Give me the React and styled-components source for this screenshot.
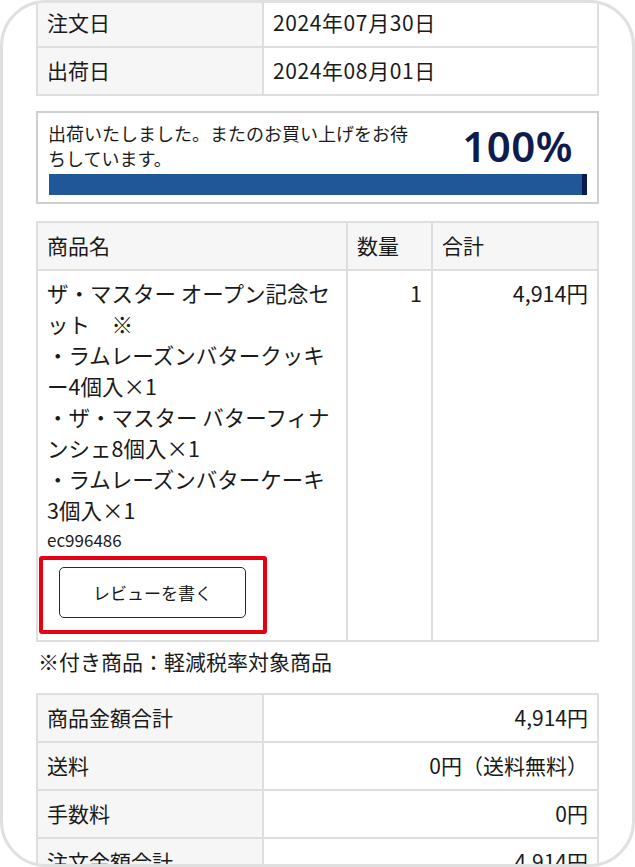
import React from 'react';
import styled, { createGlobalStyle } from 'styled-components';

const GlobalStyle = createGlobalStyle`
    html, body {
        margin: 0;
        padding: 0;
        background: #ffffff;
    }
    * {
        box-sizing: border-box;
    }
`;

const Frame = styled.div`
    width: 635px;
    height: 867px;
    border: 3px solid #e0e0e0;
    border-radius: 46px;
    overflow: hidden;
    background: #ffffff;
    font-family: "Noto Sans CJK JP", "Noto Sans", sans-serif;
    color: #1a1a1a;
`;

const Screen = styled.div`
    display: flex;
    flex-direction: column;
    padding: 0 33px;
    margin-top: -5px; /* scrolled view */
`;

const Table = styled.table`
    width: 100%;
    border-collapse: collapse;
    table-layout: fixed;
    font-size: 21px;
    margin-bottom: ${p => p.$gap || 0}px;
`;

const Cell = styled.td`
    border: 2px solid #dedede;
    height: 48px;
    padding: 0 9px;
    vertical-align: middle;
    line-height: 1.2;
    font-weight: 400;
    text-align: ${p => (p.$right ? 'right' : 'left')};
    background: ${p => (p.$head ? '#f6f6f6' : '#ffffff')};
    white-space: nowrap;
    letter-spacing: ${p => (p.$wide ? '0.6px' : '0')};
`;

const BodyCell = styled.td`
    border: 2px solid #dedede;
    padding: 6px 9px 6px 9px;
    vertical-align: top;
    text-align: ${p => (p.$right ? 'right' : 'left')};
    font-size: 21.5px;
    line-height: 31px;
`;

const ProgressBox = styled.div`
    border: 2px solid #cfcfcf;
    padding: 8px 10px 7px 10px;
    margin-bottom: 17px;
    display: flex;
    flex-direction: column;
    gap: 3px;
`;

const ProgressTop = styled.div`
    display: flex;
    align-items: center;
    justify-content: space-between;
`;

const ProgressText = styled.div`
    width: 372px;
    font-size: 18px;
    line-height: 25px;
`;

const Percent = styled.div`
    font-family: "Noto Sans", "Liberation Sans", sans-serif;
    font-weight: 600;
    font-size: 42px;
    line-height: 1;
    color: #0e1b4c;
    padding-right: 14px;
    letter-spacing: 0.5px;
`;

const Bar = styled.div`
    height: 21px;
    background: #0b1a4b;
    margin-left: 1px;
`;

const BarFill = styled.div`
    height: 100%;
    background: #1f5799;
`;

const Line = styled.span`
    display: block;
    white-space: nowrap;
`;

const Code = styled.div`
    font-size: 17px;
    line-height: 29px;
`;

const Mark = styled.div`
    display: inline-block;
    margin: 2px 0 0 -8px;
    padding: 7px 17px 12px 16px;
    border: 4px solid #e60012;
    border-radius: 3px;
`;

const ReviewButton = styled.button`
    display: block;
    width: 187px;
    height: 51px;
    border: 1.5px solid #2a2a2a;
    border-radius: 5px;
    background: #ffffff;
    color: #1a1a1a;
    font-family: "Noto Sans CJK JP", "Noto Sans", sans-serif;
    font-size: 17px;
`;

const Note = styled.div`
    font-size: 21px;
    line-height: 30px;
    margin: 4px 0 17px 2px;
    white-space: nowrap;
`;

const dates = [
    ['注文日', '2024年07月30日'],
    ['出荷日', '2024年08月01日'],
];

const productLines = [
    'ザ・マスター オープン記念セ',
    'ット　※',
    '・ラムレーズンバタークッキ',
    'ー4個入×1',
    '・ザ・マスター バターフィナ',
    'ンシェ8個入×1',
    '・ラムレーズンバターケーキ',
    '3個入×1',
];

const totals = [
    ['商品金額合計', '4,914円'],
    ['送料', '0円（送料無料）'],
    ['手数料', '0円'],
    ['注文金額合計', '4,914円'],
];

export default function App() {
    const progress = 99;

    return (
        <>
            <GlobalStyle />
            <Frame>
                <Screen>
                    <Table $gap={15}>
                        <colgroup>
                            <col style={{ width: 226 }} />
                            <col />
                        </colgroup>
                        <tbody>
                            {dates.map(([label, value]) => (
                                <tr key={label}>
                                    <Cell $head>{label}</Cell>
                                    <Cell $wide>{value}</Cell>
                                </tr>
                            ))}
                        </tbody>
                    </Table>

                    <ProgressBox>
                        <ProgressTop>
                            <ProgressText>出荷いたしました。またのお買い上げをお待ちしています。</ProgressText>
                            <Percent>100%</Percent>
                        </ProgressTop>
                        <Bar>
                            <BarFill style={{ width: `${progress}%` }} />
                        </Bar>
                    </ProgressBox>

                    <Table>
                        <colgroup>
                            <col style={{ width: 310 }} />
                            <col style={{ width: 85 }} />
                            <col />
                        </colgroup>
                        <thead>
                            <tr>
                                <Cell as="th" $head>商品名</Cell>
                                <Cell as="th" $head>数量</Cell>
                                <Cell as="th" $head>合計</Cell>
                            </tr>
                        </thead>
                        <tbody>
                            <tr>
                                <BodyCell>
                                    {productLines.map(line => (
                                        <Line key={line}>{line}</Line>
                                    ))}
                                    <Code>ec996486</Code>
                                    <Mark>
                                        <ReviewButton>レビューを書く</ReviewButton>
                                    </Mark>
                                </BodyCell>
                                <BodyCell $right>1</BodyCell>
                                <BodyCell $right>4,914円</BodyCell>
                            </tr>
                        </tbody>
                    </Table>

                    <Note>※付き商品：軽減税率対象商品</Note>

                    <Table>
                        <colgroup>
                            <col style={{ width: 226 }} />
                            <col />
                        </colgroup>
                        <tbody>
                            {totals.map(([label, value]) => (
                                <tr key={label}>
                                    <Cell $head>{label}</Cell>
                                    <Cell $right>{value}</Cell>
                                </tr>
                            ))}
                        </tbody>
                    </Table>
                </Screen>
            </Frame>
        </>
    );
}
